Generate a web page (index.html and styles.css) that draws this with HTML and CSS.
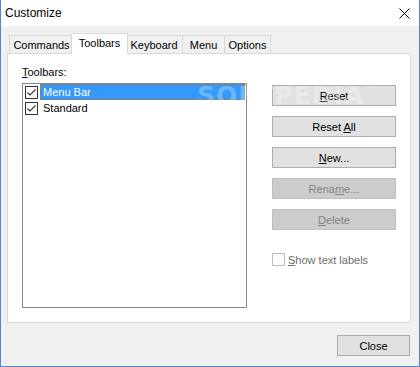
FILE: index.html
```html
<!DOCTYPE html>
<html>
<head>
<meta charset="utf-8">
<link rel="stylesheet" href="styles.css">
</head>
<body>
<div class="window">
  <div class="titlebar">
    <span class="title">Customize</span>
    <svg class="close-x" width="11" height="11" viewBox="0 0 11 11"><path d="M0.5 0.5 L10.5 10.5 M10.5 0.5 L0.5 10.5" stroke="#000" stroke-width="1" fill="none"/></svg>
  </div>
  <div class="content">
    <div class="tabs">
      <div class="tab t-commands">Commands</div>
      <div class="tab t-toolbars active">Toolbars</div>
      <div class="tab t-keyboard">Keyboard</div>
      <div class="tab t-menu">Menu</div>
      <div class="tab t-options">Options</div>
    </div>
    <div class="panel">
      <div class="left-col">
        <div class="label"><u>T</u>oolbars:</div>
        <div class="listbox">
          <div class="row selected">
            <span class="cb checked"><svg width="11" height="11" viewBox="0 0 11 11"><path d="M1.5 5.5 L4 8 L9.5 2.5" stroke="#333" stroke-width="1.2" fill="none"/></svg></span>
            <span class="row-text">Menu Bar</span>
          </div>
          <div class="row">
            <span class="cb checked"><svg width="11" height="11" viewBox="0 0 11 11"><path d="M1.5 5.5 L4 8 L9.5 2.5" stroke="#333" stroke-width="1.2" fill="none"/></svg></span>
            <span class="row-text">Standard</span>
          </div>
        </div>
      </div>
      <div class="right-col">
        <div class="btn"><span><u>R</u>eset</span></div>
        <div class="btn"><span>Reset <u>A</u>ll</span></div>
        <div class="btn"><span><u>N</u>ew...</span></div>
        <div class="btn disabled"><span>Rena<u>m</u>e...</span></div>
        <div class="btn disabled"><span><u>D</u>elete</span></div>
        <div class="check-row">
          <span class="cb disabled-cb"></span>
          <span class="check-label"><u>S</u>how text labels</span>
        </div>
      </div>
      <div class="watermark">SOFTPEDIA<sup>®</sup></div>
    </div>
    <div class="footer">
      <div class="btn close-btn"><span>Close</span></div>
    </div>
  </div>
</div>
</body>
</html>
```

FILE: styles.css
```css
* { box-sizing: border-box; }
html, body { margin: 0; padding: 0; }
body {
  width: 420px;
  height: 367px;
  overflow: hidden;
  font-family: "Liberation Sans", Arial, sans-serif;
  font-size: 11px;
  color: #000;
}
u { text-decoration: underline; text-underline-offset: 1px; }

.window {
  width: 420px;
  height: 367px;
  background: #f0f0f0;
  border-left: 1px solid #5a84c8;
  border-right: 1px solid #5a84c8;
  border-bottom: 1px solid #5a84c8;
  display: flex;
  flex-direction: column;
}

.titlebar {
  height: 26px;
  background: #fff;
  display: flex;
  align-items: center;
  justify-content: space-between;
  padding: 0 9px 0 4px;
}
.title { font-size: 12px; padding-bottom: 1px; }
.close-x { display: block; }

.content {
  padding: 7px 8px 10px 6px;
  display: flex;
  flex-direction: column;
}

.tabs {
  height: 20px;
  display: flex;
  align-items: flex-end;
  padding-left: 2px;
}
.tab {
  height: 18px;
  border: 1px solid #d9d9d9;
  border-bottom: none;
  background: #f0f0f0;
  margin-right: -1px;
  display: flex;
  align-items: center;
  justify-content: center;
  line-height: 14px;
}
.t-commands { width: 65px; }
.t-toolbars { width: 57px; }
.t-keyboard { width: 58px; }
.t-menu { width: 43px; }
.t-options { width: 47px; }
.tab.active {
  height: 21px;
  margin-left: -2px;
  margin-right: -3px;
  margin-bottom: -1px;
  background: #fff;
  position: relative;
  z-index: 2;
  padding-bottom: 2px;
}

.panel {
  height: 270px;
  border: 1px solid #d9d9d9;
  background: #fff;
  display: flex;
  padding: 11px 0 0 14px;
  position: relative;
}

.left-col { width: 225px; }
.label { height: 14px; line-height: 14px; }
.listbox {
  margin-top: 4px;
  width: 225px;
  height: 225px;
  border: 1px solid #828790;
}
.row {
  height: 16px;
  display: flex;
  align-items: center;
  padding-left: 2px;
}
.cb {
  width: 13px;
  height: 13px;
  border: 1px solid #333;
  background: #fff;
  display: flex;
  align-items: center;
  justify-content: center;
  flex: none;
}
.cb svg { display: block; }
.row-text {
  margin-left: 2px;
  padding-left: 2px;
  height: 16px;
  line-height: 14px;
  flex: 1;
  margin-right: 1px;
  border: 1px solid transparent;
}
.row.selected .row-text {
  background: #3399ff;
  color: #fff;
  border: 1px dotted #cc6a00;
}

.right-col {
  margin-left: 25px;
  padding-top: 20px;
  width: 124px;
  display: flex;
  flex-direction: column;
  gap: 10px;
}
.btn {
  height: 21px;
  background: #e1e1e1;
  border: 1px solid #adadad;
  display: flex;
  align-items: center;
  justify-content: center;
  line-height: 14px;
}
.btn.disabled {
  background: #cccccc;
  border-color: #bfbfbf;
  color: #838383;
}
.check-row {
  margin-top: 13px;
  display: flex;
  align-items: center;
  height: 13px;
}
.disabled-cb { border-color: #bcbcbc; }
.check-label { margin-left: 3px; color: #6d6d6d; line-height: 14px; }

.watermark {
  position: absolute;
  left: 189px;
  top: 27px;
  font-family: "DejaVu Sans", sans-serif;
  font-weight: bold;
  font-size: 25px;
  letter-spacing: 1px;
  color: rgba(255, 255, 255, 0.28);
  -webkit-text-stroke: 1px rgba(0, 0, 0, 0.02);
  pointer-events: none;
  z-index: 3;
}
.watermark sup { font-size: 8px; vertical-align: 14px; font-weight: normal; }

.footer {
  margin-top: 12px;
  display: flex;
  justify-content: flex-end;
  padding-right: 1px;
}
.close-btn { width: 73px; }
```
